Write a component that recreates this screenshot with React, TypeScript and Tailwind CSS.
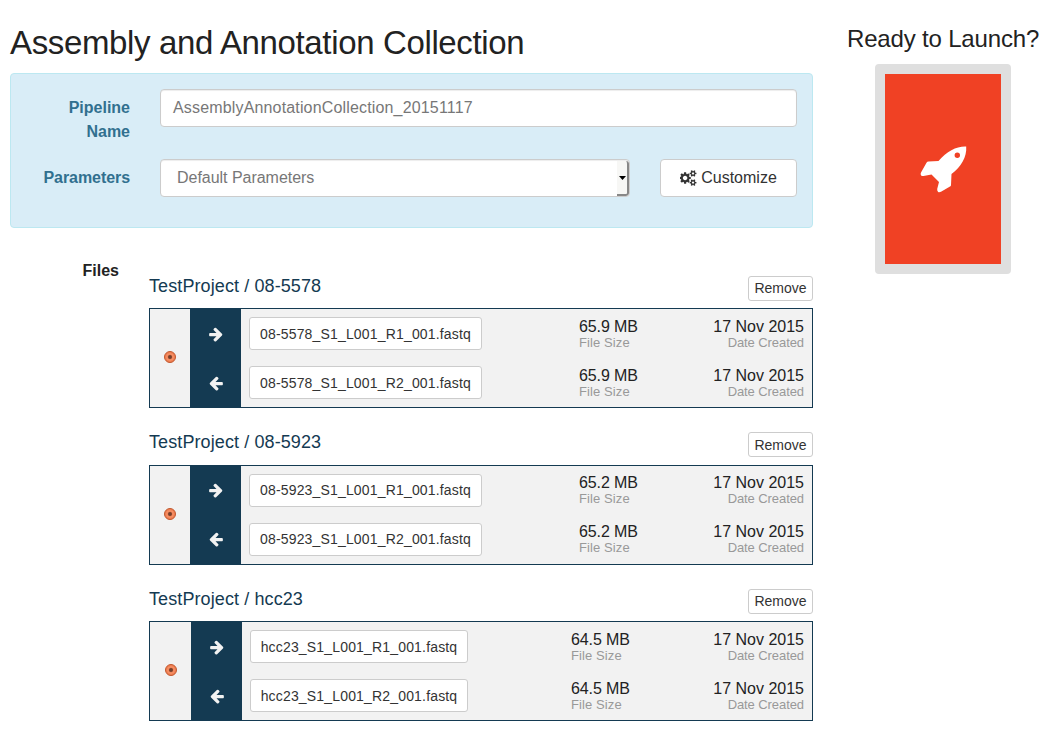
import React from "react";

const ARROW =
  "M1600 960q0 54-37 91l-651 651q-39 37-91 37-51 0-90-37l-75-75q-38-38-38-91t38-91l293-293h-704q-52 0-84.5-37.5t-32.5-90.5v-128q0-53 32.5-90.5t84.5-37.5h704l-293-294q-38-36-38-90t38-90l75-75q38-38 90-38 53 0 91 38l651 651q37 35 37 90z";

const SMALL_COG =
  "v140q0 16-149 31-12 27-30 52 51 113 51 138 0 4-4 7-122 71-124 71-8 0-46-47t-52-68q-20 2-30 2t-30-2q-14 21-52 68t-46 47q-2 0-124-71-4-3-4-7 0-25 51-138-18-25-30-52-149-15-149-31v-140q0-16 149-31 13-29 30-52-51-113-51-138 0-4 4-7 4-2 35-20t59-34 30-16q8 0 46 46.5t52 67.5q20-2 30-2t30 2q51-71 92-112l6-2q4 0 124 70 4 3 4 7 0 25-51 138 17 23 30 52 149 15 149 31z";

const COGS =
  "M832 896q0-106-75-181t-181-75-181 75-75 181 75 181 181 75 181-75 75-181zm768 512q0-52-38-90t-90-38-90 38-38 90q0 53 37.5 90.5t90.5 37.5 90.5-37.5 37.5-90.5zm0-1024q0-52-38-90t-90-38-90 38-38 90q0 53 37.5 90.5t90.5 37.5 90.5-37.5 37.5-90.5zm-384 421v185q0 10-7 19.5t-16 10.5l-155 24q-11 35-32 76 34 48 90 115 7 11 7 20 0 12-7 19-23 30-82.5 89.5t-78.5 59.5q-11 0-21-7l-115-90q-37 19-77 31-11 108-23 155-7 24-30 24h-186q-11 0-20-7.5t-10-17.5l-23-153q-34-10-75-31l-118 89q-7 7-20 7-11 0-21-8-144-133-144-160 0-9 7-19 10-14 41-53t47-61q-23-44-35-82l-152-24q-10-1-17-9.5t-7-19.5v-185q0-10 7-19.5t16-10.5l155-24q11-35 32-76-34-48-90-115-7-11-7-20 0-12 7-20 22-30 82-89t79-59q11 0 21 7l115 90q34-18 77-32 11-108 23-154 7-24 30-24h186q11 0 20 7.5t10 17.5l23 153q34 10 75 31l118-89q8-7 20-7 11 0 21 8 144 133 144 160 0 8-7 19-12 16-42 54t-45 60q23 48 34 82l152 23q10 2 17 10.5t7 19.5z" +
  "M1856 1338" + SMALL_COG + "M1856 314" + SMALL_COG;

function Arrow({ left = false }: { left?: boolean }) {
  return (
    <svg viewBox="0 110 1792 1792" className={left ? "size-4 -scale-x-100" : "size-4"} fill="#f2f2f2">
      <path d={ARROW} />
    </svg>
  );
}

function Rocket() {
  return (
    <svg viewBox="0 0 48 48" className="size-12" fill="#fff">
      <path
        fillRule="evenodd"
        d="M47.200 1.500C38 1 28 6 19.500 16L9.500 16.500Q8.200 16.500 7.500 17.700L2 27.500Q1.200 29 2 30.200Q2.800 31.300 4.500 31L12.500 29.500L20 37L18.200 44Q18 46.200 19.200 47Q20.300 47.600 22 46.800L31 41.500Q32 41 32 40L32.500 29C42 22 48 12 47.200 1.500ZM38.300 7.500a2.700 2.700 0 1 1 0 5.400a2.700 2.700 0 0 1 0-5.400Z"
      />
    </svg>
  );
}

function Disc() {
  return (
    <svg viewBox="0 0 12 12" className="mb-[2px] size-3">
      <circle cx="6" cy="6" r="5.500" fill="#f07f52" stroke="#c0582f" />
      <circle cx="6" cy="6" r="3.300" fill="none" stroke="#f79b74" strokeWidth=".8" />
      <circle cx="6" cy="6" r="2" fill="#74402d" />
    </svg>
  );
}

type Sample = { name: string; files: string[]; size: string; wide: boolean };

const samples: Sample[] = [
  { name: "08-5578", files: ["08-5578_S1_L001_R1_001.fastq", "08-5578_S1_L001_R2_001.fastq"], size: "65.9 MB", wide: true },
  { name: "08-5923", files: ["08-5923_S1_L001_R1_001.fastq", "08-5923_S1_L001_R2_001.fastq"], size: "65.2 MB", wide: true },
  { name: "hcc23", files: ["hcc23_S1_L001_R1_001.fastq", "hcc23_S1_L001_R2_001.fastq"], size: "64.5 MB", wide: false },
];

function SampleCard({ sample, raised }: { sample: Sample; raised: boolean }) {
  const { wide } = sample;
  const fileWidth = wide ? "w-[233px]" : "w-[218px]";
  const textPad = raised ? "pt-0" : "pt-px";
  return (
    <section>
      <div className={raised ? "flex h-[34px] items-start justify-between" : "flex h-[33px] items-start justify-between"}>
        <h3 className="pt-px text-[18px] leading-5 tracking-[0.1px] text-[#143a52]">TestProject / {sample.name}</h3>
        <button className={`mt-px h-[25px] w-[65px] rounded-[3px] border border-[#ccc] bg-white text-[14px] leading-[21px] text-[#333] ${raised ? "pt-[2px]" : "pt-0"}`}>
          Remove
        </button>
      </div>
      <div className="flex h-[100px] border border-[#143a52] bg-[#f2f2f2]">
        <div className={wide ? "flex w-10 items-center justify-center" : "flex w-[41px] items-center justify-center"}>
          <Disc />
        </div>
        <div className={`flex w-[51px] flex-col items-center bg-[#143a52] ${raised ? "pb-px" : "pt-px"}`}>
          <div className="flex h-[49px] shrink-0 items-center"><Arrow /></div>
          <div className="flex h-[49px] shrink-0 items-center"><Arrow left /></div>
        </div>
        <div className="flex flex-1 flex-col pl-2">
          {sample.files.map((file) => (
            <div key={file} className="flex h-[49px] items-start pt-2">
              <div className={wide ? "w-[330px]" : "w-[321px]"}>
                <button
                  className={`block h-[33px] whitespace-nowrap rounded-[3px] border border-[#ccc] bg-white text-[14px] tracking-[0.17px] text-[#333] ${fileWidth} ${textPad}`}
                >
                  {file}
                </button>
              </div>
              <div className={textPad}>
                <div className="text-[16px] leading-[17px] tracking-[-0.12px]">{sample.size}</div>
                <div className="text-[13px] leading-[15px] tracking-[0.1px] text-[#999]">File Size</div>
              </div>
              <div className={`ml-auto pr-2 text-right ${textPad}`}>
                <div className="text-[16px] leading-[17px]">17 Nov 2015</div>
                <div className="text-[13px] leading-[15px] tracking-[-0.08px] text-[#999]">Date Created</div>
              </div>
            </div>
          ))}
        </div>
      </div>
    </section>
  );
}

export default function App() {
  return (
    <div className="flex h-[733px] w-[1043px] overflow-hidden bg-white font-['Liberation_Sans',Arial,sans-serif] text-[16px] text-[#222]">
      <main className="ml-[10px] w-[803px]">
        <h1 className="flex h-[73px] items-start pt-[22px] text-[33px] leading-[41px] tracking-[-0.36px]">Assembly and Annotation Collection</h1>
        <div className="h-[155px] rounded border border-[#bce8f1] bg-[#d9edf7] px-[15px] pt-[15px]">
          <div className="flex h-[70px]">
            <label className="w-[104px] pl-8 pt-[7px] text-right font-bold leading-6 text-[#31708f]">Pipeline Name</label>
            <div className="ml-[30px] flex h-[38px] flex-1 items-center rounded border border-[#ccc] bg-white px-3 tracking-[0.16px] text-[#777] shadow-[inset_0_1px_1px_rgba(0,0,0,0.075)]">
              AssemblyAnnotationCollection_20151117
            </div>
          </div>
          <div className="flex">
            <label className="w-[104px] pt-[7px] text-right font-bold leading-6 tracking-[-0.07px] text-[#31708f]">Parameters</label>
            <div className="ml-[30px] flex h-[38px] w-[470px] items-center justify-between overflow-hidden rounded border border-[#ccc] bg-white pl-4 text-[#777] shadow-[inset_0_1px_1px_rgba(0,0,0,0.075)]">
              <span className="tracking-[-0.03px]">Default Parameters</span>
              <span className="flex h-[35px] w-3 items-center justify-center rounded-r-[3px] border-b-2 border-r-2 border-[#888] bg-[#f7f7f5]">
                <svg viewBox="0 0 7 4" className="mt-px h-[4px] w-[7px]"><path d="M0 0h7L3.500 4z" fill="#000" /></svg>
              </span>
            </div>
            <button className="ml-[30px] flex h-[38px] w-[137px] items-center justify-center gap-1 rounded border border-[#ccc] bg-white text-[#333]">
              <svg viewBox="0 0 1920 1792" className="h-4 w-[17px]" fill="#333"><path d={COGS} /></svg>
              Customize
            </button>
          </div>
        </div>
        <div className="mt-[31px] flex">
          <div className="w-[109px] text-right font-bold leading-6">Files</div>
          <div className="ml-[30px] mt-4 flex flex-1 flex-col gap-[23px]">
            {samples.map((s, i) => <SampleCard key={s.name} sample={s} raised={i === 1} />)}
          </div>
        </div>
      </main>
      <aside className="ml-[34px] w-[196px]">
        <h2 className="whitespace-nowrap pt-[24px] text-[24px] leading-[30px] tracking-[-0.17px]">Ready to Launch?</h2>
        <button className="ml-7 mt-[10px] flex h-[210px] w-[136px] items-center justify-center rounded-[4px] border-[10px] border-[#dfdfdf] bg-[#f04124]">
          <Rocket />
        </button>
      </aside>
    </div>
  );
}
